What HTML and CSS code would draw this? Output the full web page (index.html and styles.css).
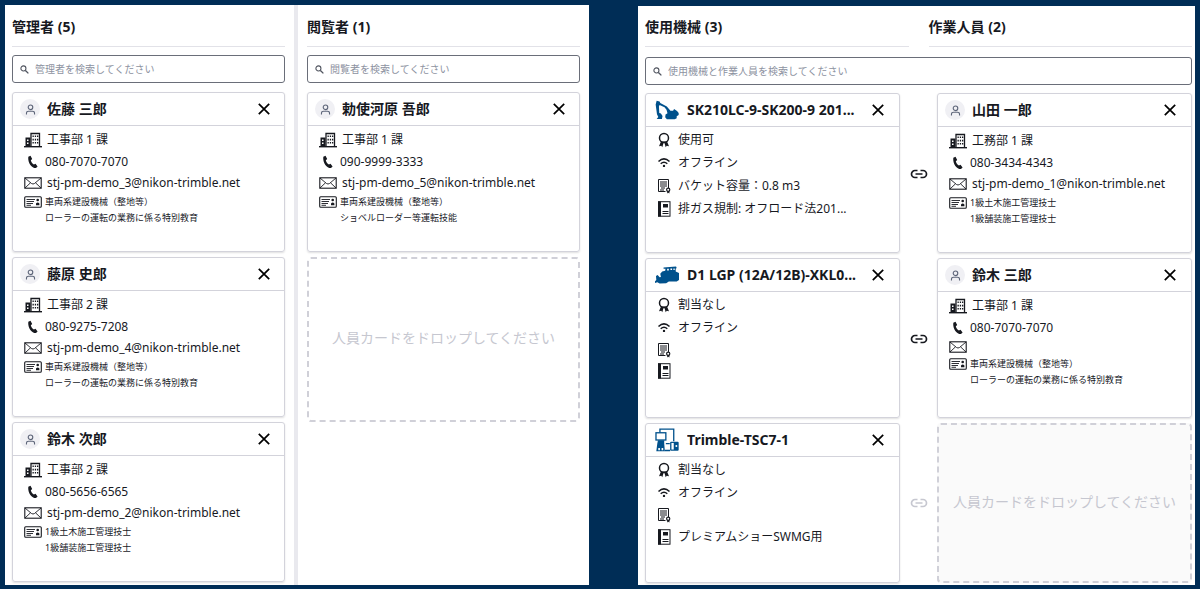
FILE: index.html
```html
<!DOCTYPE html>
<html lang="ja">
<head>
<meta charset="utf-8">
<meta name="viewport" content="width=device-width, initial-scale=1">
<title>人員・機械の割当</title>
<link rel="stylesheet" href="styles.css">
</head>
<body>
<svg class="sprite" aria-hidden="true">
  <symbol id="i-search" viewBox="0 0 10 10"><circle cx="3.8" cy="3.8" r="2.8" fill="none" stroke="currentColor" stroke-width="1.2"/><path d="M6 6l3.3 3.3" stroke="currentColor" stroke-width="1.5"/></symbol>
  <symbol id="i-user" viewBox="0 0 12 12"><circle cx="6" cy="3.6" r="2.5" fill="none" stroke="currentColor" stroke-width="1.2"/><path d="M1.6 11.4V10Q1.6 7.9 4 7.9H8Q10.4 7.9 10.4 10V11.4" fill="none" stroke="currentColor" stroke-width="1.2"/></symbol>
  <symbol id="i-close" viewBox="0 0 12 12"><path d="M.8.8l10.400 10.400M11.200.8L.8 11.200" stroke="currentColor" stroke-width="1.700"/></symbol>
  <symbol id="i-building" viewBox="0 0 18 16"><path d="M0 14h18v1.400H0z" fill="currentColor"/><path d="M1.500 5.500H6.500V15H1.500z" fill="currentColor"/><path d="M3 7.500h1.500v1.500H3zM3 10.500h1.500V12H3z" fill="#fff"/><path d="M7 14.500V1.500H15.500V14.500" fill="none" stroke="currentColor" stroke-width="1.300"/><path d="M8.500 3.500h1.300v1.600H8.500zM10.800 3.500h1.300v1.600h-1.300zM13 3.500h1.300v1.600H13zM8.500 6.800h1.300v1.600H8.500zM10.800 6.800h1.300v1.600h-1.300zM13 6.800h1.300v1.600H13zM8.500 10h1.300v1.600H8.500zM10.800 10h1.300v1.600h-1.300zM13 10h1.300v1.600H13z" fill="currentColor"/></symbol>
  <symbol id="i-phone" viewBox="0 0 18 14"><path d="M4.300 1.700L6.500.8 8.200 4 6.800 5.300C7.200 7.200 8.300 8.600 9.900 9.600L11.500 8.800 13.600 11.500 12 13.100C8.500 13.500 3.500 8.500 4.300 1.700z" fill="currentColor"/></symbol>
  <symbol id="i-mail" viewBox="0 0 18 12"><rect x=".8" y=".8" width="16.400" height="10.400" fill="none" stroke="currentColor" stroke-width="1.100"/><path d="M1 1l6.500 5.500q1.500 1 3 0L17 1M1 11l5.500-5.200M17 11l-5.500-5.200" fill="none" stroke="currentColor" stroke-width=".9"/></symbol>
  <symbol id="i-license" viewBox="0 0 18 12"><rect x=".7" y=".7" width="16.600" height="10.600" rx="1" fill="none" stroke="currentColor" stroke-width="1.100"/><path d="M2.500 3.500H11M2.500 5.500H10M2.500 7.500H9M2.500 9.300H7" stroke="currentColor" stroke-width=".9"/><circle cx="13.700" cy="4" r="1.300" fill="currentColor"/><path d="M12 9.200V7.500q1.700-2 3.400 0V9.200z" fill="currentColor"/></symbol>
  <symbol id="i-award" viewBox="0 0 14 16"><circle cx="7" cy="6" r="4.500" fill="none" stroke="currentColor" stroke-width="1.500"/><path d="M4 9.500L2 14.300l2.300-.5 1 1.500L6.500 11h1l1.200 4.300 1-1.500 2.300.5L10 9.500z" fill="currentColor"/></symbol>
  <symbol id="i-wifi" viewBox="0 0 14 12"><path d="M1.500 4.500Q7-.8 12.500 4.500M3.700 6.800q3.300-3 6.600 0" fill="none" stroke="currentColor" stroke-width="1.500"/><circle cx="7" cy="8.900" r="1.200" fill="currentColor"/></symbol>
  <symbol id="i-cert" viewBox="0 0 14 16"><path d="M8.500 13.500H1.500V1.500H11.500V10" fill="none" stroke="currentColor" stroke-width="1"/><path d="M3 4h7M3 6h7M3 8h7M4 10h4M3 12h4" stroke="currentColor" stroke-width="1"/><circle cx="11.200" cy="11.700" r="1.600" fill="#fff" stroke="currentColor" stroke-width="1.200"/><path d="M10.200 13v2.500l1-.7 1.200.7V13" fill="currentColor"/></symbol>
  <symbol id="i-book" viewBox="0 0 14 16"><rect x="1.500" y=".7" width="11.500" height="14.500" fill="none" stroke="currentColor" stroke-width="1"/><path d="M1 .5h3v15H1z" fill="currentColor"/><path d="M6 3h5v3.500H6z" fill="currentColor"/><path d="M5.500 10.500h6M5.500 12.500h6" stroke="currentColor"/></symbol>
  <symbol id="i-link" viewBox="0 0 18 10"><path d="M7.500 1.500H5a3.500 3.500 0 0 0 0 7h2.500M10.500 1.500H13a3.500 3.500 0 0 1 0 7h-2.500M5.500 5h7" fill="none" stroke="currentColor" stroke-width="1.700"/></symbol>
  <symbol id="i-excavator" viewBox="0 0 73 58"><path d="M5 1L14 3 16 8 36 18 47 31 55 31 58 26 67 32 72 38V44L66 48V54L60 57H36L31 51 32 43 38 39 35 28 29 21 14 14 12 18 13 38 18 40 23 47 21 56H5L10 50 6 42 2 12z" fill="currentColor"/></symbol>
  <symbol id="i-dozer" viewBox="0 0 73 52"><path d="M26 3L64 0 66 5 63 7V15L73 20V41L66 46H42L34 51 14 52 7 48 0 50V45L4 41 3 29 8 26 14 33 18 32 16 22 22 15 31 13 32 7 26 7z" fill="currentColor"/><path d="M37 7h5v5h-5zM47 6h5v5h-5zM56 6h4v5h-4z" fill="#fff"/></symbol>
  <symbol id="i-controller" viewBox="0 0 73 72"><path d="M15 14V3H57V40" fill="none" stroke="currentColor" stroke-width="4"/><rect x="3" y="14" width="30" height="22" fill="#fff" stroke="currentColor" stroke-width="4"/><path d="M9 37H28V47L30 70H4L7 47z" fill="currentColor"/><path d="M30 68H46M33 47H45" stroke="currentColor" stroke-width="4"/><path d="M10 60h5v7h-5zM20 60h5v7h-5z" fill="#fff"/><rect x="46" y="41" width="26" height="28" rx="3" fill="currentColor"/><rect x="50" y="45" width="7" height="20" fill="#fff"/><circle cx="65" cy="54" r="3" fill="#fff"/></symbol>
</svg>

<main class="board">
  <section class="panel staff">
    <section class="column">
      <h2 class="heading">管理者 (5)</h2>
      <label class="search"><svg class="search-icon"><use href="#i-search"/></svg><input type="search" aria-label="管理者を検索" placeholder="管理者を検索してください"></label>
      <div class="stack">
        <article class="card">
          <header class="card-head"><span class="avatar"><svg class="avatar-icon"><use href="#i-user"/></svg></span><h3 class="name">佐藤 三郎</h3><button class="close" type="button" aria-label="閉じる"><svg class="close-icon"><use href="#i-close"/></svg></button></header>
          <ul class="person">
            <li class="row"><svg class="icon"><use href="#i-building"/></svg>工事部 1 課</li>
            <li class="row near"><svg class="icon"><use href="#i-phone"/></svg>080-7070-7070</li>
            <li class="row mail"><svg class="icon"><use href="#i-mail"/></svg>stj-pm-demo_3@nikon-trimble.net</li>
            <li class="row near skill"><svg class="icon"><use href="#i-license"/></svg>車両系建設機械（整地等）</li>
            <li class="row skill-more">ローラーの運転の業務に係る特別教育</li>
          </ul>
        </article>
        <article class="card">
          <header class="card-head"><span class="avatar"><svg class="avatar-icon"><use href="#i-user"/></svg></span><h3 class="name">藤原 史郎</h3><button class="close" type="button" aria-label="閉じる"><svg class="close-icon"><use href="#i-close"/></svg></button></header>
          <ul class="person">
            <li class="row"><svg class="icon"><use href="#i-building"/></svg>工事部 2 課</li>
            <li class="row near"><svg class="icon"><use href="#i-phone"/></svg>080-9275-7208</li>
            <li class="row mail"><svg class="icon"><use href="#i-mail"/></svg>stj-pm-demo_4@nikon-trimble.net</li>
            <li class="row near skill"><svg class="icon"><use href="#i-license"/></svg>車両系建設機械（整地等）</li>
            <li class="row skill-more">ローラーの運転の業務に係る特別教育</li>
          </ul>
        </article>
        <article class="card">
          <header class="card-head"><span class="avatar"><svg class="avatar-icon"><use href="#i-user"/></svg></span><h3 class="name">鈴木 次郎</h3><button class="close" type="button" aria-label="閉じる"><svg class="close-icon"><use href="#i-close"/></svg></button></header>
          <ul class="person">
            <li class="row"><svg class="icon"><use href="#i-building"/></svg>工事部 2 課</li>
            <li class="row near"><svg class="icon"><use href="#i-phone"/></svg>080-5656-6565</li>
            <li class="row mail"><svg class="icon"><use href="#i-mail"/></svg>stj-pm-demo_2@nikon-trimble.net</li>
            <li class="row near skill"><svg class="icon"><use href="#i-license"/></svg>1級土木施工管理技士</li>
            <li class="row skill-more">1級舗装施工管理技士</li>
          </ul>
        </article>
      </div>
    </section>
    <section class="column viewers">
      <h2 class="heading">閲覧者 (1)</h2>
      <label class="search"><svg class="search-icon"><use href="#i-search"/></svg><input type="search" aria-label="閲覧者を検索" placeholder="閲覧者を検索してください"></label>
      <div class="stack">
        <article class="card">
          <header class="card-head"><span class="avatar"><svg class="avatar-icon"><use href="#i-user"/></svg></span><h3 class="name">勅使河原 吾郎</h3><button class="close" type="button" aria-label="閉じる"><svg class="close-icon"><use href="#i-close"/></svg></button></header>
          <ul class="person">
            <li class="row"><svg class="icon"><use href="#i-building"/></svg>工事部 1 課</li>
            <li class="row near"><svg class="icon"><use href="#i-phone"/></svg>090-9999-3333</li>
            <li class="row mail"><svg class="icon"><use href="#i-mail"/></svg>stj-pm-demo_5@nikon-trimble.net</li>
            <li class="row near skill"><svg class="icon"><use href="#i-license"/></svg>車両系建設機械（整地等）</li>
            <li class="row skill-more">ショベルローダー等運転技能</li>
          </ul>
        </article>
        <div class="drop">人員カードをドロップしてください</div>
      </div>
    </section>
  </section>

  <section class="panel work">
    <div class="headings">
      <h2 class="heading">使用機械 (3)</h2>
      <h2 class="heading">作業人員 (2)</h2>
    </div>
    <label class="search"><svg class="search-icon"><use href="#i-search"/></svg><input type="search" aria-label="使用機械と作業人員を検索" placeholder="使用機械と作業人員を検索してください"></label>
    <div class="stack">
      <div class="pair">
        <article class="card">
          <header class="card-head machine-head"><svg class="machine-icon"><use href="#i-excavator"/></svg><h3 class="name">SK210LC-9-SK200-9 201...</h3><button class="close" type="button" aria-label="閉じる"><svg class="close-icon"><use href="#i-close"/></svg></button></header>
          <ul class="machine">
            <li class="row"><svg class="icon"><use href="#i-award"/></svg>使用可</li>
            <li class="row"><svg class="icon"><use href="#i-wifi"/></svg>オフライン</li>
            <li class="row"><svg class="icon"><use href="#i-cert"/></svg>バケット容量：0.8 m3</li>
            <li class="row"><svg class="icon"><use href="#i-book"/></svg>排ガス規制: オフロード法201...</li>
          </ul>
        </article>
        <svg class="link"><use href="#i-link"/></svg>
        <article class="card">
          <header class="card-head"><span class="avatar"><svg class="avatar-icon"><use href="#i-user"/></svg></span><h3 class="name">山田 一郎</h3><button class="close" type="button" aria-label="閉じる"><svg class="close-icon"><use href="#i-close"/></svg></button></header>
          <ul class="person">
            <li class="row"><svg class="icon"><use href="#i-building"/></svg>工務部 1 課</li>
            <li class="row near"><svg class="icon"><use href="#i-phone"/></svg>080-3434-4343</li>
            <li class="row mail"><svg class="icon"><use href="#i-mail"/></svg>stj-pm-demo_1@nikon-trimble.net</li>
            <li class="row near skill"><svg class="icon"><use href="#i-license"/></svg>1級土木施工管理技士</li>
            <li class="row skill-more">1級舗装施工管理技士</li>
          </ul>
        </article>
      </div>
      <div class="pair">
        <article class="card">
          <header class="card-head machine-head"><svg class="machine-icon"><use href="#i-dozer"/></svg><h3 class="name">D1 LGP (12A/12B)-XKL0...</h3><button class="close" type="button" aria-label="閉じる"><svg class="close-icon"><use href="#i-close"/></svg></button></header>
          <ul class="machine">
            <li class="row"><svg class="icon"><use href="#i-award"/></svg>割当なし</li>
            <li class="row"><svg class="icon"><use href="#i-wifi"/></svg>オフライン</li>
            <li class="row blank"><svg class="icon"><use href="#i-cert"/></svg></li>
            <li class="row blank"><svg class="icon"><use href="#i-book"/></svg></li>
          </ul>
        </article>
        <svg class="link"><use href="#i-link"/></svg>
        <article class="card">
          <header class="card-head"><span class="avatar"><svg class="avatar-icon"><use href="#i-user"/></svg></span><h3 class="name">鈴木 三郎</h3><button class="close" type="button" aria-label="閉じる"><svg class="close-icon"><use href="#i-close"/></svg></button></header>
          <ul class="person">
            <li class="row"><svg class="icon"><use href="#i-building"/></svg>工事部 1 課</li>
            <li class="row near"><svg class="icon"><use href="#i-phone"/></svg>080-7070-7070</li>
            <li class="row mail blank"><svg class="icon"><use href="#i-mail"/></svg></li>
            <li class="row near skill"><svg class="icon"><use href="#i-license"/></svg>車両系建設機械（整地等）</li>
            <li class="row skill-more">ローラーの運転の業務に係る特別教育</li>
          </ul>
        </article>
      </div>
      <div class="pair">
        <article class="card">
          <header class="card-head machine-head"><svg class="machine-icon"><use href="#i-controller"/></svg><h3 class="name">Trimble-TSC7-1</h3><button class="close" type="button" aria-label="閉じる"><svg class="close-icon"><use href="#i-close"/></svg></button></header>
          <ul class="machine">
            <li class="row"><svg class="icon"><use href="#i-award"/></svg>割当なし</li>
            <li class="row"><svg class="icon"><use href="#i-wifi"/></svg>オフライン</li>
            <li class="row blank"><svg class="icon"><use href="#i-cert"/></svg></li>
            <li class="row"><svg class="icon"><use href="#i-book"/></svg>プレミアムショーSWMG用</li>
          </ul>
        </article>
        <svg class="link off"><use href="#i-link"/></svg>
        <div class="drop shaded">人員カードをドロップしてください</div>
      </div>
    </div>
  </section>
</main>
</body>
</html>
```

FILE: styles.css
```css
* { box-sizing: border-box; }

body {
  margin: 0;
  background: #002d56;
  color: #17191f;
  font: 12px/18px "Noto Sans", "Noto Sans CJK JP", sans-serif;
}

h2, h3, ul { margin: 0; padding: 0; }
ul { list-style: none; }

.sprite { display: none; }

.board {
  display: grid;
  grid-template-columns: 584fr 557fr;
  gap: 49px;
  padding: 5px;
}

.panel { background: #fff; }

.staff {
  display: grid;
  grid-template-columns: 289fr 295fr;
}

.column { padding: 0 9px 2px 7px; }
.viewers {
  padding-left: 9px;
  border-left: 4px solid #e9e9ee;
}

.work {
  margin-top: 1px;
  padding: 0 3px 2px 7px;
}

.headings {
  display: grid;
  grid-template-columns: 1fr 1fr;
  gap: 20px;
}

.heading {
  padding: 12px 0 9px;
  border-bottom: 1px solid #e2e2e8;
  font-size: 14px;
  line-height: 20px;
  font-weight: 700;
}
.work .heading { padding-top: 11px; }

.search {
  display: flex;
  align-items: center;
  gap: 6px;
  height: 28px;
  margin: 8px 0 9px;
  padding: 0 7px;
  border: 1px solid #6a6e79;
  border-radius: 3px;
}
.work .search { margin: 10px 0 8px; }
.search-icon { width: 9px; height: 9px; color: #50545f; }
.search input {
  flex: 1;
  min-width: 0;
  padding: 0;
  border: 0;
  outline: 0;
  background: none;
  font: inherit;
  font-size: 10px;
}
.search input::placeholder { color: #8d92a1; }

.stack {
  display: flex;
  flex-direction: column;
  gap: 5px;
}
.work .stack { gap: 4px; }

.card {
  min-width: 0;
  min-height: 160px;
  border: 1px solid #d3d3db;
  border-radius: 3px;
  box-shadow: 0 1px 2px #00000020;
}

.card-head {
  display: flex;
  align-items: center;
  gap: 7px;
  height: 33px;
  padding: 0 14px 0 7px;
  border-bottom: 1px solid #d3d3db;
}
.work .card-head { padding-right: 15px; }
.work .machine-head { gap: 8px; padding-left: 9px; }

.avatar {
  display: grid;
  place-items: center;
  width: 20px;
  height: 20px;
  border-radius: 50%;
  background: #f0f0f4;
}
.avatar-icon { width: 11px; height: 11px; color: #5d6579; }

.name {
  flex: 1;
  min-width: 0;
  overflow: hidden;
  font-size: 14px;
  line-height: 20px;
  font-weight: 700;
  text-overflow: ellipsis;
  white-space: nowrap;
}

.close {
  display: grid;
  padding: 0;
  border: 0;
  background: none;
  color: #000;
  cursor: pointer;
}
.close-icon { width: 12px; height: 12px; }

.machine-icon { width: 24px; height: 24px; color: #00518c; }

.person { padding: 3px 11px; }
.machine { padding: 1px 11px; }

.row {
  display: flex;
  align-items: center;
  gap: 5px;
  height: 22px;
  white-space: nowrap;
}
.near { gap: 3px; }
.mail { height: 20px; }
.mail.blank { height: 16px; }
.skill { height: 17px; font-size: 9px; }
.skill-more { height: 16px; padding-left: 21px; font-size: 9px; }

.icon { width: 18px; height: 16px; }
.machine .row { gap: 7px; height: 23px; }
.machine .blank { height: 21px; }
.machine .icon { width: 14px; }

.pair {
  display: grid;
  grid-template-columns: 1fr 37px 1fr;
  min-height: 161px;
}
.pair:last-child { min-height: 160px; }
.pair .card { margin-bottom: 1px; }
.pair:last-child .card { margin-bottom: 0; }
.link {
  place-self: center;
  width: 18px;
  height: 10px;
}
.off { color: #c6c7d0; }

.drop {
  display: grid;
  place-items: center;
  min-height: 165px;
  padding-bottom: 3px;
  border: 2px dashed #d0d0d8;
  border-radius: 4px;
  color: #c6c7d0;
  font-size: 14px;
}
.shaded { min-height: 160px; background: #fafafa; }
```
